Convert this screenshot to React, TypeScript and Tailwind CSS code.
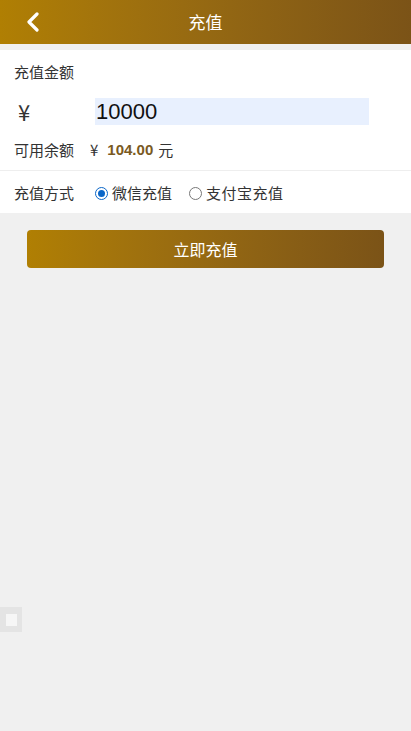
import React from "react";

export default function App() {
  const font = { fontFamily: '"Microsoft YaHei", "Noto Sans CJK SC", "Liberation Sans", sans-serif' };
  return (
    <div className="relative w-[411px] h-[731px] bg-[#f0f0f0] overflow-hidden" style={font}>
      <div className="h-[44px] flex items-center justify-center relative bg-gradient-to-r from-[#b07f03] to-[#7b5317]">
        <svg className="absolute left-[26px] top-[12px]" width="14" height="20" viewBox="0 0 14 20">
          <path d="M11 2 L3 10 L11 18" fill="none" stroke="#fff" strokeWidth="3.2" strokeLinecap="round" strokeLinejoin="round" />
        </svg>
        <span className="text-white text-[17px]">充值</span>
      </div>
      <div className="mt-[6px] bg-white">
        <div className="px-[14px] pt-[12px] pb-[10px] border-b border-[#eeeeee]">
          <div className="text-[15px] text-[#333] leading-[20px]">充值金额</div>
          <div className="flex items-center mt-[15px] h-[28px]">
            <span className="w-[81px] text-[22px] text-[#333] pl-[4px] leading-[28px]">¥</span>
            <div className="w-[274px] h-[27px] bg-[#e8f0fe] flex items-center text-[22px] text-[#111] leading-[27px] pl-[1px]" style={{ fontFamily: '"Liberation Sans", Arial, sans-serif' }}>
              10000
            </div>
          </div>
          <div className="flex items-center mt-[15px] text-[15px] text-[#333] leading-[20px]">
            <span>可用余额</span>
            <span className="ml-[16px]">¥</span>
            <span className="ml-[9px] font-bold text-[#7a5a1f]" style={{ fontFamily: '"Liberation Sans", Arial, sans-serif' }}>104.00</span>
            <span className="ml-[5px]">元</span>
          </div>
        </div>
        <div className="flex items-center px-[14px] h-[42px] pt-[2px] text-[15px] text-[#333]">
          <span>充值方式</span>
          <span className="ml-[21px] flex items-center">
            <span className="w-[13px] h-[13px] rounded-full border border-[#0a66c8] flex items-center justify-center">
              <span className="w-[7px] h-[7px] rounded-full bg-[#0a66c8]" />
            </span>
            <span className="ml-[4px]">微信充值</span>
          </span>
          <span className="ml-[17px] flex items-center">
            <span className="w-[13px] h-[13px] rounded-full border border-[#777]" />
            <span className="ml-[4px] tracking-[0.5px]">支付宝充值</span>
          </span>
        </div>
      </div>
      <div className="px-[27px] mt-[17px]">
        <div className="h-[38px] rounded-[4px] bg-gradient-to-r from-[#b07f03] to-[#7b5317] flex items-center justify-center text-white text-[16px]">
          立即充值
        </div>
      </div>
      <div className="absolute left-0 top-[607px] w-[22px] h-[25px] bg-[#e4e4e4] flex items-center justify-center">
        <div className="w-[11px] h-[12px] bg-[#f6f6f6]" />
      </div>
    </div>
  );
}
